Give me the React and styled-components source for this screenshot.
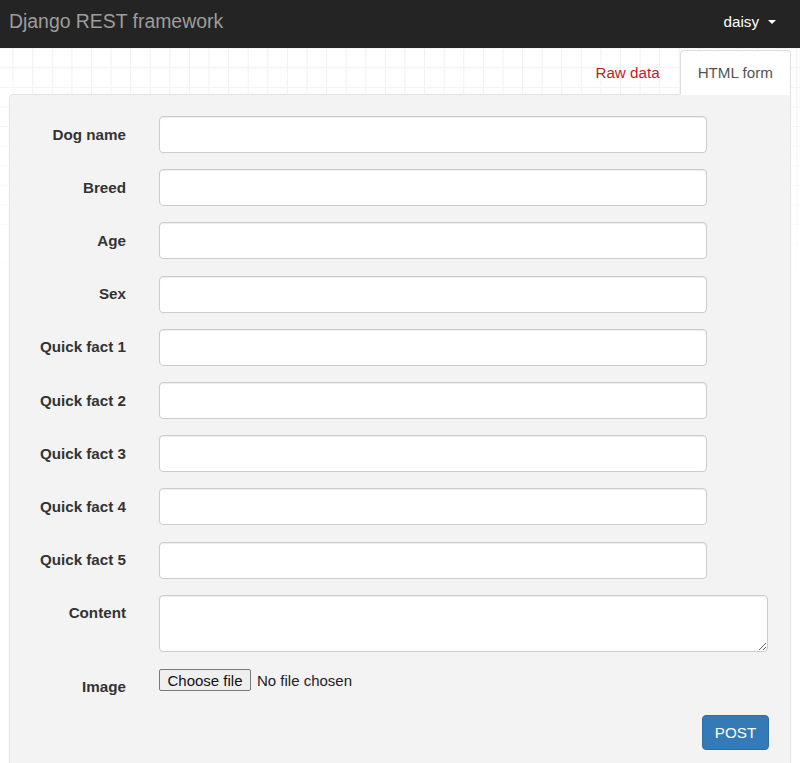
import React from 'react';
import styled, { createGlobalStyle } from 'styled-components';

const FIELDS = [
  'Dog name',
  'Breed',
  'Age',
  'Sex',
  'Quick fact 1',
  'Quick fact 2',
  'Quick fact 3',
  'Quick fact 4',
  'Quick fact 5',
];

const GlobalStyle = createGlobalStyle`
  html, body {
    margin: 0;
    padding: 0;
  }

  body {
    font-family: 'Liberation Sans', Arial, sans-serif;
    font-size: 15.2px;
    color: #333;
    background-color: #fff;
    background-image:
      linear-gradient(to bottom, rgba(255, 255, 255, 0) 40px, #fff 300px),
      linear-gradient(to right, #efefef 0 1px, transparent 1px),
      linear-gradient(to bottom, #efefef 0 1px, transparent 1px);
    background-size: 100% 100%, 19.6px 19.6px, 19.6px 19.6px;
    background-position: 0 0, 12.6px 8.5px, 12.6px 8.5px;
    background-repeat: no-repeat, repeat, repeat;
    min-height: 100vh;
  }

  * {
    box-sizing: border-box;
  }
`;

export default function App() {
  return (
    <>
      <GlobalStyle />
      <Navbar>
        <Brand>Django REST framework</Brand>
        <UserMenu>
          daisy
          <Caret />
        </UserMenu>
      </Navbar>

      <Container>
        <Tabs>
          <Tab>Raw data</Tab>
          <Tab $active>HTML form</Tab>
        </Tabs>

        <Well>
          <Form onSubmit={(e) => e.preventDefault()}>
            {FIELDS.map((name) => (
              <Row key={name}>
                <Label>{name}</Label>
                <Input type="text" />
              </Row>
            ))}

            <Row>
              <Label>Content</Label>
              <TextArea />
            </Row>

            <Row>
              <Label>Image</Label>
              <FilePicker>
                <FileButton type="button">Choose file</FileButton>
                <FileStatus>No file chosen</FileStatus>
              </FilePicker>
            </Row>

            <Actions>
              <PostButton type="submit">POST</PostButton>
            </Actions>
          </Form>
        </Well>
      </Container>
    </>
  );
}

const Navbar = styled.nav`
  height: 48px;
  background: #242424;
  display: flex;
  align-items: flex-start;
  justify-content: space-between;
  padding: 0 24px 0 9px;
`;

const Brand = styled.div`
  font-size: 19.4px;
  line-height: 42px;
  color: #9d9d9d;
`;

const UserMenu = styled.div`
  display: flex;
  align-items: center;
  gap: 9px;
  font-size: 15.2px;
  line-height: 43px;
  color: #fff;
`;

const Caret = styled.span`
  width: 0;
  height: 0;
  margin-top: 1px;
  border-left: 4.5px solid transparent;
  border-right: 4.5px solid transparent;
  border-top: 4.5px solid #fff;
`;

const Container = styled.div`
  padding: 2px 9px 0;
`;

const Tabs = styled.div`
  display: flex;
  justify-content: flex-end;
  gap: 2px;
  margin-bottom: -1px;
  position: relative;
  z-index: 1;
`;

const Tab = styled.div`
  padding: 0 17px;
  height: 45px;
  line-height: 43px;
  font-size: 15.2px;
  border: 1px solid ${({ $active }) => ($active ? '#ddd' : 'transparent')};
  border-bottom-color: ${({ $active }) => ($active ? '#fff' : 'transparent')};
  border-radius: 4px 4px 0 0;
  background: ${({ $active }) => ($active ? '#fff' : 'transparent')};
  color: ${({ $active }) => ($active ? '#555' : '#b71f1f')};
`;

const Well = styled.div`
  background: #f3f3f3;
  border: 1px solid #e3e3e3;
  border-radius: 4px 0 4px 4px;
  padding: 21px 21px 20px 0;
`;

const Form = styled.form`
  display: flex;
  flex-direction: column;
`;

const Row = styled.div`
  display: grid;
  grid-template-columns: 116px 1fr;
  column-gap: 33px;
  align-items: start;
  margin-bottom: 16.2px;
`;

const Label = styled.label`
  padding-top: 7.6px;
  line-height: 21.7px;
  font-weight: bold;
  text-align: right;
  color: #333;
`;

const Input = styled.input`
  width: 548px;
  height: 37px;
  border: 1px solid #ccc;
  border-radius: 4px;
  background: #fff;
  box-shadow: inset 0 1px 1px rgba(0, 0, 0, 0.075);
  font: inherit;
  padding: 6px 12px;
`;

const TextArea = styled.textarea`
  width: 609px;
  height: 57.5px;
  border: 1px solid #ccc;
  border-radius: 4px;
  background: #fff;
  box-shadow: inset 0 1px 1px rgba(0, 0, 0, 0.075);
  font: inherit;
  padding: 6px 12px;
  display: block;
`;

const FilePicker = styled.div`
  display: flex;
  align-items: center;
  gap: 6px;
  padding-top: 1px;
`;

const FileButton = styled.button`
  height: 22px;
  width: 92px;
  padding: 0;
  font-family: 'Liberation Sans', Arial, sans-serif;
  font-size: 15px;
  color: #111;
  background: #efefef;
  border: 1px solid #7a7a7a;
  border-radius: 2px;
`;

const FileStatus = styled.span`
  font-size: 15px;
  color: #222;
`;

const Actions = styled.div`
  display: flex;
  justify-content: flex-end;
  padding-top: 1px;
`;

const PostButton = styled.button`
  width: 67px;
  height: 35px;
  padding: 0;
  font-family: 'Liberation Sans', Arial, sans-serif;
  font-size: 15.2px;
  color: #fff;
  background: #337ab7;
  border: 1px solid #2e6da4;
  border-radius: 4px;
`;
